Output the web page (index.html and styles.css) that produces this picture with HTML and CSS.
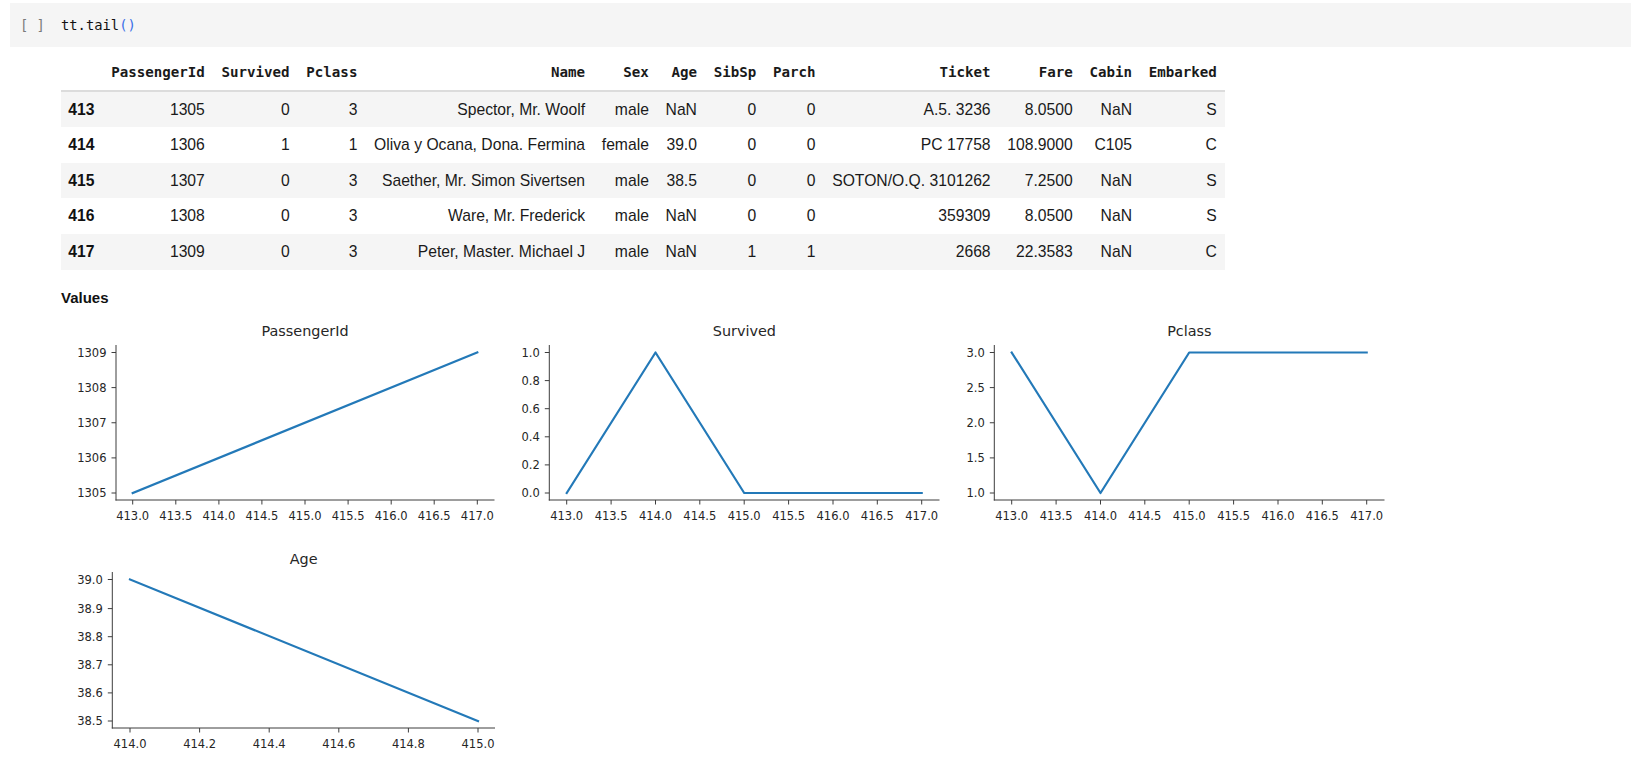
FILE: index.html
```html
<!DOCTYPE html>
<html>
<head>
<meta charset="utf-8">
<link rel="stylesheet" href="styles.css">
</head>
<body>
<div class="code-cell">
  <span class="prompt">[ ]</span>
  <code class="code">tt.tail<span class="paren">()</span></code>
</div>
<div class="output">
  <table class="df">
    <thead>
      <tr><th class="idx"></th><th>PassengerId</th><th>Survived</th><th>Pclass</th><th>Name</th><th>Sex</th><th>Age</th><th>SibSp</th><th>Parch</th><th>Ticket</th><th>Fare</th><th>Cabin</th><th>Embarked</th></tr>
    </thead>
    <tbody>
      <tr><th class="idx">413</th><td>1305</td><td>0</td><td>3</td><td>Spector, Mr. Woolf</td><td>male</td><td>NaN</td><td>0</td><td>0</td><td>A.5. 3236</td><td>8.0500</td><td>NaN</td><td>S</td></tr>
      <tr><th class="idx">414</th><td>1306</td><td>1</td><td>1</td><td>Oliva y Ocana, Dona. Fermina</td><td>female</td><td>39.0</td><td>0</td><td>0</td><td>PC 17758</td><td>108.9000</td><td>C105</td><td>C</td></tr>
      <tr><th class="idx">415</th><td>1307</td><td>0</td><td>3</td><td>Saether, Mr. Simon Sivertsen</td><td>male</td><td>38.5</td><td>0</td><td>0</td><td>SOTON/O.Q. 3101262</td><td>7.2500</td><td>NaN</td><td>S</td></tr>
      <tr><th class="idx">416</th><td>1308</td><td>0</td><td>3</td><td>Ware, Mr. Frederick</td><td>male</td><td>NaN</td><td>0</td><td>0</td><td>359309</td><td>8.0500</td><td>NaN</td><td>S</td></tr>
      <tr><th class="idx">417</th><td>1309</td><td>0</td><td>3</td><td>Peter, Master. Michael J</td><td>male</td><td>NaN</td><td>1</td><td>1</td><td>2668</td><td>22.3583</td><td>NaN</td><td>C</td></tr>
    </tbody>
  </table>

  <div class="section-title">Values</div>

  <div class="charts">
    <!-- PassengerId -->
    <svg class="chart" width="445" height="228" viewBox="0 0 445 228">
      <text class="title" x="245" y="18.5">PassengerId</text>
      <g class="axis">
        <line x1="56" y1="28" x2="56" y2="183.5"/>
        <line x1="55.5" y1="183" x2="434.5" y2="183"/>
        <line x1="56" y1="176" x2="51.5" y2="176"/>
        <line x1="56" y1="140.9" x2="51.5" y2="140.9"/>
        <line x1="56" y1="105.75" x2="51.5" y2="105.75"/>
        <line x1="56" y1="70.6" x2="51.5" y2="70.6"/>
        <line x1="56" y1="35.5" x2="51.5" y2="35.5"/>
        <line x1="72.7" y1="183" x2="72.7" y2="187.5"/>
        <line x1="115.8" y1="183" x2="115.8" y2="187.5"/>
        <line x1="158.9" y1="183" x2="158.9" y2="187.5"/>
        <line x1="201.9" y1="183" x2="201.9" y2="187.5"/>
        <line x1="245" y1="183" x2="245" y2="187.5"/>
        <line x1="288.1" y1="183" x2="288.1" y2="187.5"/>
        <line x1="331.2" y1="183" x2="331.2" y2="187.5"/>
        <line x1="374.2" y1="183" x2="374.2" y2="187.5"/>
        <line x1="417.3" y1="183" x2="417.3" y2="187.5"/>
      </g>
      <g class="ylab">
        <text x="46.5" y="180">1305</text>
        <text x="46.5" y="144.9">1306</text>
        <text x="46.5" y="109.75">1307</text>
        <text x="46.5" y="74.6">1308</text>
        <text x="46.5" y="39.5">1309</text>
      </g>
      <g class="xlab">
        <text x="72.7" y="203">413.0</text>
        <text x="115.8" y="203">413.5</text>
        <text x="158.9" y="203">414.0</text>
        <text x="201.9" y="203">414.5</text>
        <text x="245" y="203">415.0</text>
        <text x="288.1" y="203">415.5</text>
        <text x="331.2" y="203">416.0</text>
        <text x="374.2" y="203">416.5</text>
        <text x="417.3" y="203">417.0</text>
      </g>
      <polyline class="series" points="72.7,176 417.3,35.5"/>
    </svg>

    <!-- Survived -->
    <svg class="chart" width="445" height="228" viewBox="0 0 445 228">
      <text class="title" x="239.4" y="18.5">Survived</text>
      <g class="axis">
        <line x1="44.3" y1="28" x2="44.3" y2="183.5"/>
        <line x1="43.8" y1="183" x2="434.5" y2="183"/>
        <line x1="44.3" y1="176" x2="39.8" y2="176"/>
        <line x1="44.3" y1="147.9" x2="39.8" y2="147.9"/>
        <line x1="44.3" y1="119.8" x2="39.8" y2="119.8"/>
        <line x1="44.3" y1="91.7" x2="39.8" y2="91.7"/>
        <line x1="44.3" y1="63.6" x2="39.8" y2="63.6"/>
        <line x1="44.3" y1="35.5" x2="39.8" y2="35.5"/>
        <line x1="61.7" y1="183" x2="61.7" y2="187.5"/>
        <line x1="106.1" y1="183" x2="106.1" y2="187.5"/>
        <line x1="150.5" y1="183" x2="150.5" y2="187.5"/>
        <line x1="194.8" y1="183" x2="194.8" y2="187.5"/>
        <line x1="239.2" y1="183" x2="239.2" y2="187.5"/>
        <line x1="283.6" y1="183" x2="283.6" y2="187.5"/>
        <line x1="328" y1="183" x2="328" y2="187.5"/>
        <line x1="372.3" y1="183" x2="372.3" y2="187.5"/>
        <line x1="416.7" y1="183" x2="416.7" y2="187.5"/>
      </g>
      <g class="ylab">
        <text x="34.8" y="180">0.0</text>
        <text x="34.8" y="151.9">0.2</text>
        <text x="34.8" y="123.8">0.4</text>
        <text x="34.8" y="95.7">0.6</text>
        <text x="34.8" y="67.6">0.8</text>
        <text x="34.8" y="39.5">1.0</text>
      </g>
      <g class="xlab">
        <text x="61.7" y="203">413.0</text>
        <text x="106.1" y="203">413.5</text>
        <text x="150.5" y="203">414.0</text>
        <text x="194.8" y="203">414.5</text>
        <text x="239.2" y="203">415.0</text>
        <text x="283.6" y="203">415.5</text>
        <text x="328" y="203">416.0</text>
        <text x="372.3" y="203">416.5</text>
        <text x="416.7" y="203">417.0</text>
      </g>
      <polyline class="series" points="61.7,176 150.5,35.5 239.2,176 328,176 416.7,176"/>
    </svg>

    <!-- Pclass -->
    <svg class="chart" width="445" height="228" viewBox="0 0 445 228">
      <text class="title" x="239.4" y="18.5">Pclass</text>
      <g class="axis">
        <line x1="44.3" y1="28" x2="44.3" y2="183.5"/>
        <line x1="43.8" y1="183" x2="434.5" y2="183"/>
        <line x1="44.3" y1="176" x2="39.8" y2="176"/>
        <line x1="44.3" y1="140.9" x2="39.8" y2="140.9"/>
        <line x1="44.3" y1="105.75" x2="39.8" y2="105.75"/>
        <line x1="44.3" y1="70.6" x2="39.8" y2="70.6"/>
        <line x1="44.3" y1="35.5" x2="39.8" y2="35.5"/>
        <line x1="61.7" y1="183" x2="61.7" y2="187.5"/>
        <line x1="106.1" y1="183" x2="106.1" y2="187.5"/>
        <line x1="150.5" y1="183" x2="150.5" y2="187.5"/>
        <line x1="194.8" y1="183" x2="194.8" y2="187.5"/>
        <line x1="239.2" y1="183" x2="239.2" y2="187.5"/>
        <line x1="283.6" y1="183" x2="283.6" y2="187.5"/>
        <line x1="328" y1="183" x2="328" y2="187.5"/>
        <line x1="372.3" y1="183" x2="372.3" y2="187.5"/>
        <line x1="416.7" y1="183" x2="416.7" y2="187.5"/>
      </g>
      <g class="ylab">
        <text x="34.8" y="180">1.0</text>
        <text x="34.8" y="144.9">1.5</text>
        <text x="34.8" y="109.75">2.0</text>
        <text x="34.8" y="74.6">2.5</text>
        <text x="34.8" y="39.5">3.0</text>
      </g>
      <g class="xlab">
        <text x="61.7" y="203">413.0</text>
        <text x="106.1" y="203">413.5</text>
        <text x="150.5" y="203">414.0</text>
        <text x="194.8" y="203">414.5</text>
        <text x="239.2" y="203">415.0</text>
        <text x="283.6" y="203">415.5</text>
        <text x="328" y="203">416.0</text>
        <text x="372.3" y="203">416.5</text>
        <text x="416.7" y="203">417.0</text>
      </g>
      <polyline class="series" points="61.7,35.5 150.5,176 239.2,35.5 328,35.5 416.7,35.5"/>
    </svg>

    <!-- Age -->
    <svg class="chart" width="445" height="228" viewBox="0 0 445 228">
      <text class="title" x="243.6" y="18.5">Age</text>
      <g class="axis">
        <line x1="52.3" y1="27" x2="52.3" y2="183.5"/>
        <line x1="51.8" y1="183" x2="435" y2="183"/>
        <line x1="52.3" y1="176" x2="47.8" y2="176"/>
        <line x1="52.3" y1="147.9" x2="47.8" y2="147.9"/>
        <line x1="52.3" y1="119.8" x2="47.8" y2="119.8"/>
        <line x1="52.3" y1="91.7" x2="47.8" y2="91.7"/>
        <line x1="52.3" y1="63.6" x2="47.8" y2="63.6"/>
        <line x1="52.3" y1="34.5" x2="47.8" y2="34.5"/>
        <line x1="70" y1="183" x2="70" y2="187.5"/>
        <line x1="139.6" y1="183" x2="139.6" y2="187.5"/>
        <line x1="209.2" y1="183" x2="209.2" y2="187.5"/>
        <line x1="278.8" y1="183" x2="278.8" y2="187.5"/>
        <line x1="348.4" y1="183" x2="348.4" y2="187.5"/>
        <line x1="418" y1="183" x2="418" y2="187.5"/>
      </g>
      <g class="ylab">
        <text x="42.8" y="180">38.5</text>
        <text x="42.8" y="151.9">38.6</text>
        <text x="42.8" y="123.8">38.7</text>
        <text x="42.8" y="95.7">38.8</text>
        <text x="42.8" y="67.6">38.9</text>
        <text x="42.8" y="38.5">39.0</text>
      </g>
      <g class="xlab">
        <text x="70" y="203">414.0</text>
        <text x="139.6" y="203">414.2</text>
        <text x="209.2" y="203">414.4</text>
        <text x="278.8" y="203">414.6</text>
        <text x="348.4" y="203">414.8</text>
        <text x="418" y="203">415.0</text>
      </g>
      <polyline class="series" points="70,34.5 418,176"/>
    </svg>
  </div>
</div>
</body>
</html>
```

FILE: styles.css
```css
html, body {
  margin: 0;
  padding: 0;
  background: #ffffff;
}

body {
  font-family: "Liberation Sans", Arial, sans-serif;
  color: #000;
}

.code-cell {
  margin: 3px 0 0 10px;
  height: 43.5px;
  background: #f5f5f5;
  display: flex;
  align-items: center;
  padding-left: 10px;
  font-family: "DejaVu Sans Mono", "Liberation Mono", monospace;
  font-size: 13.8px;
}

.prompt {
  color: #7a7a7a;
  width: 41px;
  white-space: pre;
}

.code {
  font-family: inherit;
  color: #111;
}

.paren {
  color: #3a6fe8;
}

.output {
  padding-left: 61px;
  padding-top: 9.5px;
}

.df {
  border-collapse: collapse;
  border-spacing: 0;
  font-size: 15.7px;
  line-height: 17.6px;
}

.df th,
.df td {
  padding: 9px 8.35px;
  text-align: right;
  white-space: nowrap;
  vertical-align: middle;
}

.df thead th {
  font-family: "DejaVu Sans Mono", "Liberation Mono", monospace;
  font-size: 14.15px;
  font-weight: bold;
  color: #1a1a1a;
  border-bottom: 2px solid #dcdcdc;
  padding-top: 8px;
  padding-bottom: 8px;
}

.df tbody th.idx {
  font-weight: bold;
  text-align: left;
  color: #111;
  padding-left: 7.3px;
}

.df tbody td {
  color: #1a1a1a;
}

.df tbody tr:nth-child(odd) {
  background: #f5f5f5;
}

.section-title {
  margin-top: 19.5px;
  font-weight: bold;
  font-size: 15px;
  line-height: 18px;
  color: #111;
}

.charts {
  display: flex;
  flex-wrap: wrap;
  width: 1335px;
  margin-left: -1px;
  margin-top: 10px;
}

.chart {
  display: block;
  flex: 0 0 445px;
}

.chart text {
  font-family: "DejaVu Sans", sans-serif;
  fill: #262626;
}

.chart .title {
  font-size: 14.4px;
  text-anchor: middle;
}

.chart .ylab text {
  font-size: 11.5px;
  text-anchor: end;
}

.chart .xlab text {
  font-size: 11.5px;
  text-anchor: middle;
}

.chart .axis line {
  stroke: #3d3d3d;
  stroke-width: 1;
}

.chart .series {
  fill: none;
  stroke: #2379b8;
  stroke-width: 2.2;
  stroke-linejoin: round;
  stroke-linecap: square;
}
```
